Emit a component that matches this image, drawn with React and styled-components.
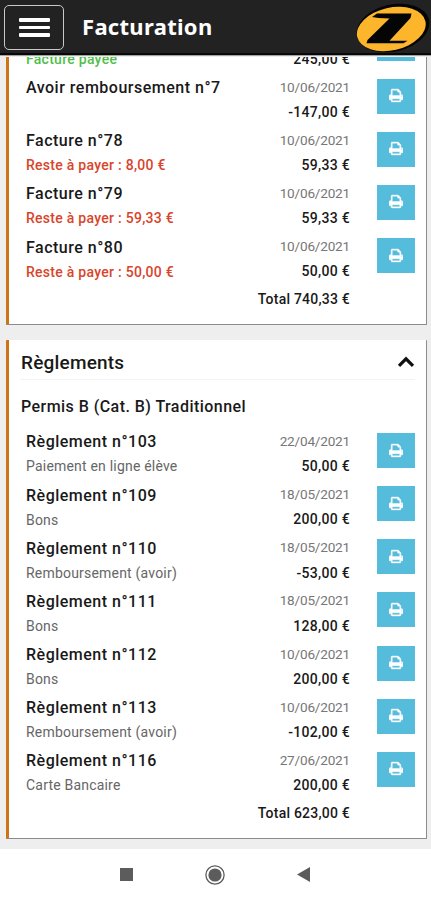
import React from "react"
import styled, { createGlobalStyle } from "styled-components"

const factures = [
  { id: 77, title: "", note: "Facture payée", kind: "paid", date: "", amount: "245,00 €" },
  { id: 7, title: "Avoir remboursement n°7", note: "", date: "10/06/2021", amount: "-147,00 €" },
  { id: 78, title: "Facture n°78", note: "Reste à payer : 8,00 €", kind: "due", date: "10/06/2021", amount: "59,33 €" },
  { id: 79, title: "Facture n°79", note: "Reste à payer : 59,33 €", kind: "due", date: "10/06/2021", amount: "59,33 €" },
  { id: 80, title: "Facture n°80", note: "Reste à payer : 50,00 €", kind: "due", date: "10/06/2021", amount: "50,00 €" },
]

const reglements = [
  { id: 103, title: "Règlement n°103", note: "Paiement en ligne élève", date: "22/04/2021", amount: "50,00 €" },
  { id: 109, title: "Règlement n°109", note: "Bons", date: "18/05/2021", amount: "200,00 €" },
  { id: 110, title: "Règlement n°110", note: "Remboursement (avoir)", date: "18/05/2021", amount: "-53,00 €" },
  { id: 111, title: "Règlement n°111", note: "Bons", date: "18/05/2021", amount: "128,00 €" },
  { id: 112, title: "Règlement n°112", note: "Bons", date: "10/06/2021", amount: "200,00 €" },
  { id: 113, title: "Règlement n°113", note: "Remboursement (avoir)", date: "10/06/2021", amount: "-102,00 €" },
  { id: 116, title: "Règlement n°116", note: "Carte Bancaire", date: "27/06/2021", amount: "200,00 €" },
]

const PrintIcon = () => (
  <svg width="14" height="15" viewBox="0 0 1664 1792" fill="#fff" stroke="#fff" strokeWidth="50">
    <path d="M384 1536h896v-256h-896v256zm0-640h896v-384h-160q-40 0-68-28t-28-68v-160h-640v640zm1152 64q0-26-19-45t-45-19-45 19-19 45 19 45 45 19 45-19 19-45zm128 0v416q0 13-9.5 22.5t-22.5 9.5h-224v160q0 40-28 68t-68 28h-960q-40 0-68-28t-28-68v-160h-224q-13 0-22.5-9.5t-9.5-22.5v-416q0-79 56.5-135.5t135.5-56.5h64v-544q0-40 28-68t68-28h672q40 0 88 20t76 48l152 152q28 28 48 76t20 88v256h64q79 0 135.5 56.5t56.5 135.5z" />
  </svg>
)

const Logo = () => (
  <svg width="75" height="52" viewBox="0 0 75 52">
    <ellipse cx="38" cy="26" rx="37" ry="23.5" transform="rotate(-13 38 26)" fill="#050505" />
    <ellipse cx="36.3" cy="27" rx="35" ry="21.3" transform="rotate(-13 36.3 27)" fill="#fdb52b" />
    <path d="M17 15 22 11.5H56.5L55.5 16 34.5 38.8H52.5L48.5 41.2H11.5L12.5 38 34.5 16.5 23.5 16Z" fill="#050505" />
  </svg>
)

const Line = ({ item }) => (
  <Row>
    <Info>
      <Title>{item.title}</Title>
      <Note $kind={item.kind}>{item.note}</Note>
    </Info>
    <Values>
      <DateText>{item.date}</DateText>
      <Amount>{item.amount}</Amount>
    </Values>
    <PrintButton aria-label="Imprimer">
      <PrintIcon />
    </PrintButton>
  </Row>
)

const App = () => {
  return (
    <Screen>
      <GlobalStyle />
      <Header>
        <MenuButton aria-label="Menu">
          <Bar />
          <Bar />
          <Bar />
        </MenuButton>
        <PageTitle>Facturation</PageTitle>
        <Logo />
      </Header>
      <Content>
        <Card $scrolled>
          {factures.map((item) => (
            <Line key={item.id} item={item} />
          ))}
          <Total>Total 740,33 €</Total>
        </Card>
        <Card>
          <CardHeader>
            <span>Règlements</span>
            <svg width="18" height="12" viewBox="0 0 18 12" fill="none">
              <path d="M2 9.8 9 2.8 16 9.8" stroke="#111" strokeWidth="3.2" />
            </svg>
          </CardHeader>
          <Category>Permis B (Cat. B) Traditionnel</Category>
          {reglements.map((item) => (
            <Line key={item.id} item={item} />
          ))}
          <Total>Total 623,00 €</Total>
        </Card>
      </Content>
      <SystemBar>
        <svg width="13" height="13" viewBox="0 0 13 13">
          <rect width="13" height="13" fill="#5c5c5c" />
        </svg>
        <svg width="20" height="20" viewBox="0 0 20 20">
          <circle cx="10" cy="10" r="9.1" fill="none" stroke="#5c5c5c" strokeWidth="1.3" />
          <circle cx="10" cy="10" r="6.6" fill="#5c5c5c" />
        </svg>
        <svg width="13" height="15" viewBox="0 0 13 15">
          <path d="M0 7.5 13 0V15Z" fill="#5c5c5c" />
        </svg>
      </SystemBar>
    </Screen>
  )
}

// Styling

const GlobalStyle = createGlobalStyle`
  * {
    box-sizing: border-box;
  }
  body {
    margin: 0;
    background: #fff;
    font-family: Roboto, sans-serif;
    color: #191919;
  }
`

const Screen = styled.div`
  display: flex;
  flex-direction: column;
  width: 431px;
  height: 900px;
  overflow: hidden;
`

const Header = styled.header`
  position: relative;
  z-index: 1;
  display: flex;
  align-items: center;
  flex: none;
  height: 55px;
  padding: 0 1px 0 4px;
  background: #222;
  border-bottom: 2px solid #080808;
  box-shadow: 0 1px 0 #a2a2a2, 0 2px 0 #ededed;
  svg {
    margin: 3px 0 0 auto;
  }
`

const MenuButton = styled.button`
  display: flex;
  flex-direction: column;
  align-items: center;
  justify-content: center;
  gap: 4px;
  width: 60px;
  height: 45px;
  margin-top: 2px;
  padding: 0;
  background: transparent;
  border: 1.5px solid #c9c9c9;
  border-radius: 5px;
`

const Bar = styled.span`
  width: 31px;
  height: 3.5px;
  border-radius: 1px;
  background: #fff;
`

const PageTitle = styled.h1`
  margin: -2px 0 0 18px;
  font-family: "Noto Sans", sans-serif;
  font-size: 22px;
  font-weight: 700;
  line-height: 28px;
  letter-spacing: 0.3px;
  color: #fff;
`

const Content = styled.main`
  flex: none;
  height: 794px;
  padding: 0 4px 0 6px;
  overflow: hidden;
  background: #eee;
`

const Card = styled.section`
  margin-top: ${(props) => (props.$scrolled ? "-29.4px" : "15px")};
  padding: 0 11px 11px 11px;
  height: ${(props) => (props.$scrolled ? "299.4px" : "499px")};
  background: #fff;
  border: solid #8c8c8c;
  border-width: 0 1px 1.5px 3px;
  border-left-color: #cf7416;
  border-radius: 1px;
`

const CardHeader = styled.div`
  display: flex;
  align-items: center;
  justify-content: space-between;
  height: 40px;
  padding: 5px 0 0 1px;
  border-bottom: 1px solid #f3f3f3;
  font-size: 19px;
  font-weight: 500;
  letter-spacing: 0.2px;
`

const Category = styled.h2`
  margin: 0;
  height: 53px;
  padding-left: 1px;
  font-size: 16px;
  font-weight: 500;
  line-height: 53px;
  letter-spacing: 0.45px;
`

const Row = styled.div`
  display: flex;
  height: 53.13px;
  padding-left: 6px;
`

const Info = styled.div`
  flex: 1;
  white-space: nowrap;
`

const Title = styled.div`
  height: 22px;
  margin-top: -1.6px;
  font-size: 16px;
  font-weight: 500;
  line-height: 22px;
  letter-spacing: 0.5px;
`

const noteColors = {
  paid: "#4fbf4a",
  due: "#d8452b",
}

const Note = styled.div`
  margin-top: 3px;
  font-size: 14px;
  font-weight: ${(props) => (props.$kind ? 500 : 400)};
  line-height: 20px;
  letter-spacing: ${(props) => (props.$kind ? "0.27px" : "0.2px")};
  color: ${(props) => noteColors[props.$kind] || "#666"};
`

const Values = styled.div`
  width: 110px;
  text-align: right;
`

const DateText = styled.div`
  height: 20px;
  margin-top: -2px;
  font-size: 13.6px;
  line-height: 20px;
  letter-spacing: -0.2px;
  color: #777;
`

const Amount = styled.div`
  margin-top: 5.3px;
  font-size: 14px;
  font-weight: 500;
  line-height: 20px;
  letter-spacing: 0.3px;
`

const PrintButton = styled.button`
  display: flex;
  align-items: center;
  justify-content: center;
  width: 38px;
  height: 35px;
  margin-left: 27px;
  padding: 0 0 1px;
  background: #56bcdc;
  border: 0;
`

const Total = styled.div`
  margin: -2px 65px 0 0;
  font-size: 14px;
  font-weight: 500;
  line-height: 20px;
  letter-spacing: 0.22px;
  text-align: right;
`

const SystemBar = styled.footer`
  display: flex;
  align-items: center;
  justify-content: space-between;
  height: 51px;
  padding: 0 121px 0 120px;
`

export default App
